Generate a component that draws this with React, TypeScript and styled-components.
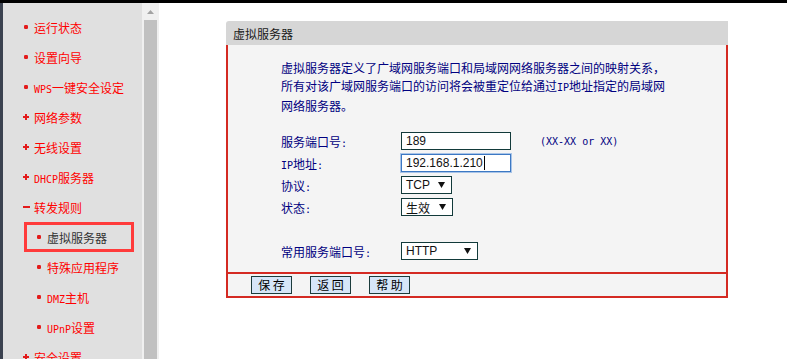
import React from 'react';
import styled, { createGlobalStyle } from 'styled-components';

type MarkerKind = 'dot' | 'plus' | 'minus';

interface IMenuItem {
  label: string;
  marker: MarkerKind;
  sub?: boolean;
  active?: boolean;
}

const MENU: IMenuItem[] = [
  { label: '运行状态', marker: 'dot' },
  { label: '设置向导', marker: 'dot' },
  { label: 'WPS一键安全设定', marker: 'dot' },
  { label: '网络参数', marker: 'plus' },
  { label: '无线设置', marker: 'plus' },
  { label: 'DHCP服务器', marker: 'plus' },
  { label: '转发规则', marker: 'minus' },
  { label: '虚拟服务器', marker: 'dot', sub: true, active: true },
  { label: '特殊应用程序', marker: 'dot', sub: true },
  { label: 'DMZ主机', marker: 'dot', sub: true },
  { label: 'UPnP设置', marker: 'dot', sub: true },
  { label: '安全设置', marker: 'plus' },
];

const GlobalStyle = createGlobalStyle`
  html, body {
    margin: 0;
    padding: 0;
    height: 100%;
    overflow: hidden;
    background: #fff;
  }
  body {
    font-family: "Noto Sans CJK SC", "Liberation Sans", sans-serif;
    font-size: 12px;
  }
`;

// ascii runs get the narrow mono face, like the old bitmap font did
const withLatin = (text: string) =>
  text.split(/([A-Za-z0-9:\-]+)/).map((part, i) =>
    /^[A-Za-z0-9:\-]+$/.test(part) ? <Latin key={i}>{part}</Latin> : part
  );

const Marker = ({ kind }: { kind: MarkerKind }) => (
  <MarkerSvg viewBox="0 0 8 8" width="8" height="8">
    {kind === 'dot' && <rect x="2" y="2" width="4" height="4" rx="1.2" />}
    {kind === 'plus' && (
      <>
        <rect x="1" y="3" width="6" height="2" />
        <rect x="3" y="1" width="2" height="6" />
      </>
    )}
    {kind === 'minus' && <rect x="1" y="3" width="7" height="2" />}
  </MarkerSvg>
);

const DropArrow = () => (
  <svg width="7" height="6" viewBox="0 0 7 6">
    <path d="M0 0 H7 L3.5 6 Z" fill="#111" />
  </svg>
);

const Select = ({ value, width }: { value: string; width: number }) => (
  <SelectBox style={{ width }}>
    <span>{value}</span>
    <DropArrow />
  </SelectBox>
);

export default function App() {
  return (
    <>
      <GlobalStyle />
      <Frame>
        <TopBar />
        <Main>
          <Edge />
          <Sidebar>
            {MENU.map((item, idx) => (
              <MenuRow key={idx} $sub={item.sub} $active={item.active}>
                <Marker kind={item.marker} />
                <span>{withLatin(item.label)}</span>
              </MenuRow>
            ))}
          </Sidebar>
          <ScrollTrack>
            <ScrollArrow>
              <svg width="7" height="4" viewBox="0 0 7 4">
                <path d="M3.5 0 L7 4 H0 Z" fill="#a3a3a3" />
              </svg>
            </ScrollArrow>
            <ScrollThumb />
          </ScrollTrack>
          <Content>
            <Panel>
              <PanelHead>虚拟服务器</PanelHead>
              <PanelBody>
                <Intro>
                  虚拟服务器定义了广域网服务端口和局域网网络服务器之间的映射关系，
                  <br />
                  所有对该广域网服务端口的访问将会被重定位给通过<Latin>IP</Latin>地址指定的局域网
                  <br />
                  网络服务器。
                </Intro>
                <Form>
                  <FormRow>
                    <Label>服务端口号<Latin>:</Latin></Label>
                    <TextBox>189</TextBox>
                    <Hint>(XX-XX or XX)</Hint>
                  </FormRow>
                  <FormRow>
                    <Label><Latin>IP</Latin>地址<Latin>:</Latin></Label>
                    <TextBox $focused>
                      192.168.1.210
                      <Caret />
                    </TextBox>
                  </FormRow>
                  <FormRow>
                    <Label>协议<Latin>:</Latin></Label>
                    <Select value="TCP" width={51} />
                  </FormRow>
                  <FormRow>
                    <Label>状态<Latin>:</Latin></Label>
                    <Select value="生效" width={52} />
                  </FormRow>
                  <FormRow />
                  <FormRow>
                    <Label>常用服务端口号<Latin>:</Latin></Label>
                    <Select value="HTTP" width={77} />
                  </FormRow>
                </Form>
                <Footer>
                  <Button>保 存</Button>
                  <Button>返 回</Button>
                  <Button>帮 助</Button>
                </Footer>
              </PanelBody>
            </Panel>
          </Content>
        </Main>
      </Frame>
    </>
  );
}

const Frame = styled.div`
  display: flex;
  flex-direction: column;
  height: 100vh;
`;

const TopBar = styled.div`
  height: 3px;
  background: #000;
  flex: none;
`;

const Main = styled.div`
  flex: 1;
  display: flex;
  min-height: 0;
`;

const Edge = styled.div`
  width: 3px;
  background: #3b4250;
`;

const Sidebar = styled.nav`
  width: 139px;
  background: #e0e0e0;
  padding-top: 9px;
  overflow: hidden;
  color: #ff0000;
`;

const MenuRow = styled.div<{ $sub?: boolean; $active?: boolean }>`
  display: flex;
  align-items: center;
  height: 30px;
  box-sizing: border-box;
  white-space: nowrap;
  margin-left: ${(p) => (p.$sub ? '21px' : '0')};
  width: ${(p) => (p.$sub ? '110px' : 'auto')};
  padding-left: ${(p) => (p.$sub ? '8px' : '19px')};
  border: 3px solid ${(p) => (p.$active ? '#ff3b3b' : 'transparent')};
  border-left-width: ${(p) => (p.$sub ? '3px' : '0')};
  color: ${(p) => (p.$active ? '#333' : '#ff0000')};
`;

const MarkerSvg = styled.svg`
  flex: none;
  margin-right: 4px;
  fill: #e31b1b;
`;

const Latin = styled.span`
  font-family: "DejaVu Sans Mono", "Liberation Mono", monospace;
  font-size: 10px;
`;

const ScrollTrack = styled.div`
  width: 17px;
  background: #f0f0f0;
  display: flex;
  flex-direction: column;
  align-items: center;
`;

const ScrollArrow = styled.div`
  height: 17px;
  width: 100%;
  display: flex;
  align-items: center;
  justify-content: center;
`;

const ScrollThumb = styled.div`
  flex: 1;
  width: 13px;
  background: #c1c1c1;
`;

const Content = styled.main`
  flex: 1;
  background: #fff;
  padding: 18px 0 0 67px;
`;

const Panel = styled.section`
  width: 502px;
`;

const PanelHead = styled.div`
  height: 24px;
  display: flex;
  align-items: center;
  padding-left: 7px;
  background: #d6d6d6;
  border-top-left-radius: 3px;
  color: #1a1a1a;
`;

const PanelBody = styled.div`
  background: #f4f4f4;
  border: 2px solid #d42a22;
  border-top: none;
`;

const Intro = styled.p`
  margin: 0;
  padding: 14px 0 0 53px;
  line-height: 18px;
  color: #000080;
  white-space: nowrap;
`;

const Form = styled.div`
  margin-top: 15px;
  padding-left: 53px;
`;

const FormRow = styled.div`
  display: flex;
  align-items: center;
  height: 22px;
`;

const Label = styled.span`
  width: 120px;
  flex: none;
  color: #000080;
`;

const TextBox = styled.div<{ $focused?: boolean }>`
  width: 110px;
  height: 18px;
  box-sizing: border-box;
  display: flex;
  align-items: center;
  padding-left: 4px;
  background: #fff;
  border: 1px solid ${(p) => (p.$focused ? '#3c78c3' : '#123a3a')};
  box-shadow: ${(p) => (p.$focused ? '0 0 0 1px #a8c4e8' : 'none')};
  font-family: "Liberation Sans", Arial, sans-serif;
  font-size: 12px;
  color: #111;
`;

const Caret = styled.span`
  width: 1px;
  height: 14px;
  background: #000;
  margin-left: 1px;
`;

const Hint = styled.span`
  margin-left: 29px;
  font-family: "DejaVu Sans Mono", "Liberation Mono", monospace;
  font-size: 10px;
  color: #000080;
`;

const SelectBox = styled.div`
  height: 18px;
  box-sizing: border-box;
  display: flex;
  align-items: center;
  justify-content: space-between;
  padding: 0 6px 0 4px;
  background: #fff;
  border: 1px solid #123a3a;
  font-family: "Liberation Sans", "Noto Sans CJK SC", sans-serif;
  font-size: 12px;
  color: #111;
`;

const Footer = styled.div`
  margin-top: 10px;
  height: 24px;
  box-sizing: border-box;
  border-top: 2px solid #d42a22;
  display: flex;
  align-items: flex-start;
  gap: 18px;
  padding: 2px 0 0 23px;
`;

const Button = styled.button`
  width: 41px;
  height: 18px;
  padding: 0;
  background: #d6e6f8;
  border: 1px solid #1b3b3b;
  font-family: "Noto Sans CJK SC", sans-serif;
  font-size: 12px;
  line-height: 16px;
  color: #000;
`;
